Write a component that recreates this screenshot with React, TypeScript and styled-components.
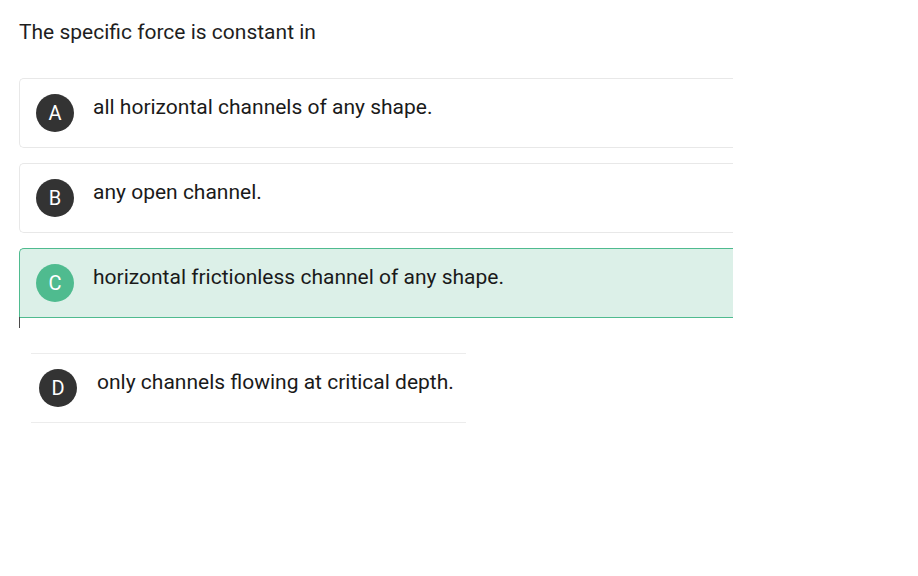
import * as React from 'react';
import styled, { createGlobalStyle, css } from 'styled-components';

const GlobalStyle = createGlobalStyle`
  body {
    margin: 0;
    background: #ffffff;
    font-family: Roboto, 'Liberation Sans', sans-serif;
    color: #1a1a1a;
  }
`;

const Page = styled.div`
  padding: 18px 19px;
`;

const Question = styled.p`
  margin: 0 0 32px;
  font-size: 21px;
  line-height: 28px;
  color: #1e1e1e;
`;

const Options = styled.div`
  display: flex;
  flex-direction: column;
  gap: 15px;
  width: 714px;
`;

const Option = styled.div<{ $selected?: boolean }>`
  position: relative;
  display: flex;
  align-items: flex-start;
  gap: 19px;
  height: 70px;
  box-sizing: border-box;
  padding: 15px 16px;
  border: 1px solid #e8e8e8;
  border-right: none;
  border-radius: 5px 0 0 5px;
  background: #ffffff;

  ${({ $selected }) =>
    $selected &&
    css`
      background: #dcf0e8;
      border-color: #4fbb8f;
      border-bottom-left-radius: 0;

      &::after {
        content: '';
        position: absolute;
        left: -1px;
        top: 100%;
        width: 1px;
        height: 11px;
        background: #4a4a4a;
      }
    `}
`;

const LooseOption = styled.div`
  display: flex;
  align-items: flex-start;
  gap: 20px;
  width: 435px;
  height: 70px;
  box-sizing: border-box;
  margin: 35px 0 0 12px;
  padding: 15px 8px;
  border-top: 1px solid #ececec;
  border-bottom: 1px solid #ececec;
`;

const Letter = styled.span<{ $selected?: boolean }>`
  flex: none;
  display: flex;
  align-items: center;
  justify-content: center;
  width: 38px;
  height: 38px;
  border-radius: 50%;
  background: ${({ $selected }) => ($selected ? '#4fbb8f' : '#333333')};
  color: #ffffff;
  font-size: 20px;
  line-height: 1;
`;

const Text = styled.span`
  font-size: 21px;
  line-height: 26px;
  color: #1a1a1a;
`;

const options = [
  { key: 'A', text: 'all horizontal channels of any shape.' },
  { key: 'B', text: 'any open channel.' },
  { key: 'C', text: 'horizontal frictionless channel of any shape.', selected: true },
];

export default function App() {
  return (
    <Page>
      <GlobalStyle />
      <Question>The specific force is constant in</Question>
      <Options>
        {options.map((o) => (
          <Option key={o.key} $selected={o.selected}>
            <Letter $selected={o.selected}>{o.key}</Letter>
            <Text>{o.text}</Text>
          </Option>
        ))}
      </Options>
      <LooseOption>
        <Letter>D</Letter>
        <Text>only channels flowing at critical depth.</Text>
      </LooseOption>
    </Page>
  );
}
